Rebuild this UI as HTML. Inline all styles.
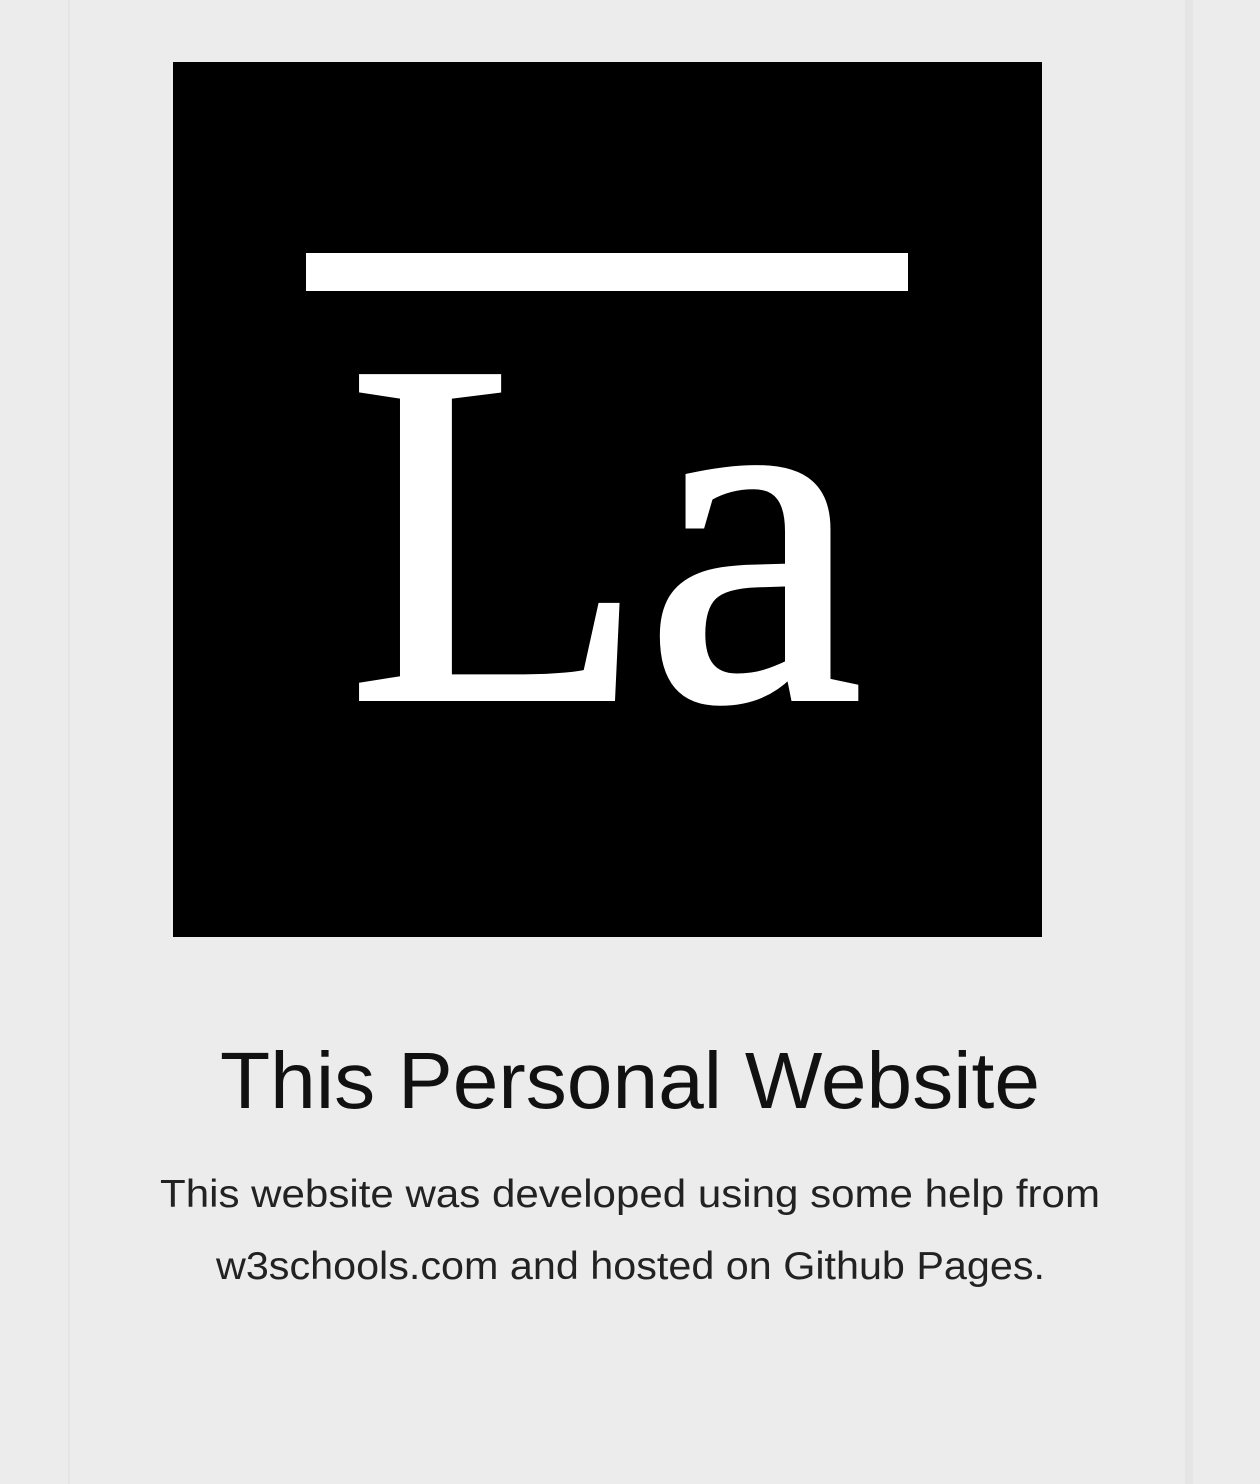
<!DOCTYPE html>
<html><head><meta charset="utf-8"><style>
html,body{margin:0;padding:0;background:#ececec;width:1260px;height:1484px;overflow:hidden}
</style></head><body>
<svg width="1260" height="1484" viewBox="0 0 1260 1484" xmlns="http://www.w3.org/2000/svg">
<rect width="1260" height="1484" fill="#ececec"/>
<rect x="68" y="0" width="2" height="1484" fill="#e6e6e6"/>
<rect x="1185" y="0" width="8" height="1484" fill="#e5e5e5"/>
<rect x="173" y="62" width="869" height="875" fill="#000"/>
<rect x="306" y="253" width="602" height="38" fill="#fff"/>
<text x="348" y="698" font-family="Liberation Serif, serif" font-size="490" fill="#fff" stroke="#fff" stroke-width="6" textLength="514" lengthAdjust="spacingAndGlyphs">La</text>
<text x="220" y="1108" font-family="Liberation Sans, sans-serif" font-size="80" fill="#111" textLength="820" lengthAdjust="spacingAndGlyphs">This Personal Website</text>
<text x="160" y="1207" font-family="Liberation Sans, sans-serif" font-size="39" fill="#222" textLength="940" lengthAdjust="spacingAndGlyphs">This website was developed using some help from</text>
<text x="216" y="1279" font-family="Liberation Sans, sans-serif" font-size="39" fill="#222" textLength="829" lengthAdjust="spacingAndGlyphs">w3schools.com and hosted on Github Pages.</text>
</svg>
</body></html>
